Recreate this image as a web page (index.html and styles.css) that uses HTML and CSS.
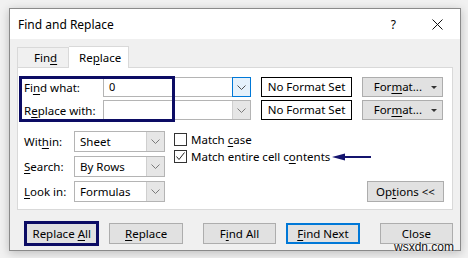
FILE: index.html
```html
<!DOCTYPE html>
<html lang="en">
<head>
    <meta charset="UTF-8">
    <title>Find and Replace</title>
    <link rel="stylesheet" href="styles.css">
</head>
<body>

    <div class="dialog">
        <div class="titlebar">
            <span class="title">Find and Replace</span>
            <span class="help">?</span>
            <svg class="close-icon" width="11" height="11" viewBox="0 0 11 11">
                <path d="M0.5 0.5 L10.5 10.5 M10.5 0.5 L0.5 10.5" stroke="#111" stroke-width="1" fill="none"/>
            </svg>
        </div>

        <div class="content">
            <div class="tabs">
                <div class="tab">Fin<u>d</u></div>
                <div class="tab active">Re<u>p</u>lace</div>
            </div>

            <div class="panel">
                <div class="field-row">
                    <span class="label">Fi<u>n</u>d what:</span>
                    <div class="combo">
                        <span class="combo-text">0</span>
                        <span class="combo-btn focused">
                            <svg width="9" height="5" viewBox="0 0 9 5"><path d="M0.5 0.5 L4.5 4.5 L8.5 0.5" stroke="#505050" fill="none"/></svg>
                        </span>
                    </div>
                    <div class="format-set">No Format Set</div>
                    <div class="btn format-btn"><span>For<u>m</u>at...</span><span class="caret"></span></div>
                </div>
                <div class="field-row">
                    <span class="label">R<u>e</u>place with:</span>
                    <div class="combo">
                        <span class="combo-text"></span>
                        <span class="combo-btn">
                            <svg width="9" height="5" viewBox="0 0 9 5"><path d="M0.5 0.5 L4.5 4.5 L8.5 0.5" stroke="#7a7a7a" fill="none"/></svg>
                        </span>
                    </div>
                    <div class="format-set">No Format Set</div>
                    <div class="btn format-btn"><span>For<u>m</u>at...</span><span class="caret"></span></div>
                </div>

                <div class="lower">
                    <div class="selects">
                        <div class="select-row">
                            <span class="select-label">Wit<u>h</u>in:</span>
                            <div class="select"><span>Sheet</span><span class="select-btn"><svg width="9" height="5" viewBox="0 0 9 5"><path d="M0.5 0.5 L4.5 4.5 L8.5 0.5" stroke="#7a7a7a" fill="none"/></svg></span></div>
                        </div>
                        <div class="select-row">
                            <span class="select-label"><u>S</u>earch:</span>
                            <div class="select"><span>By Rows</span><span class="select-btn"><svg width="9" height="5" viewBox="0 0 9 5"><path d="M0.5 0.5 L4.5 4.5 L8.5 0.5" stroke="#7a7a7a" fill="none"/></svg></span></div>
                        </div>
                        <div class="select-row">
                            <span class="select-label"><u>L</u>ook in:</span>
                            <div class="select"><span>Formulas</span><span class="select-btn"><svg width="9" height="5" viewBox="0 0 9 5"><path d="M0.5 0.5 L4.5 4.5 L8.5 0.5" stroke="#7a7a7a" fill="none"/></svg></span></div>
                        </div>
                    </div>

                    <div class="checks">
                        <label class="check"><span class="box"></span><span>Match <u>c</u>ase</span></label>
                        <label class="check">
                            <span class="box">
                                <svg width="11" height="11" viewBox="0 0 11 11"><path d="M1.5 5.5 L4 8.5 L9.5 1.5" stroke="#222" stroke-width="1" fill="none"/></svg>
                            </span><span>Match entire cell c<u>o</u>ntents</span>
                        </label>
                    </div>

                    <div class="btn options-btn">Op<u>t</u>ions &lt;&lt;</div>
                </div>

                <!-- annotation overlays -->
                <div class="highlight"></div>
                <svg class="pointer" width="40" height="8" viewBox="0 0 40 8">
                    <path d="M0 4 L13 0.5 L13 7.5 Z" fill="#14146e"/>
                    <rect x="12" y="3" width="27" height="2" fill="#14146e"/>
                </svg>
            </div>

            <div class="actions">
                <div class="btn action marked">Replace <u>A</u>ll</div>
                <div class="btn action gap-s"><u>R</u>eplace</div>
                <div class="btn action gap-l">F<u>i</u>nd All</div>
                <div class="btn action gap-s default"><u>F</u>ind Next</div>
                <div class="btn action gap-l">Close</div>
            </div>
        </div>
    </div>

    <div class="watermark">wsxdn.com</div>

</body>
</html>
```

FILE: styles.css
```css
/* Page */
body {
    margin: 0;
    padding: 8px 0 0 9px;
    background-color: #f1f1f1;
    font-family: "Noto Sans", "Open Sans", sans-serif;
    font-size: 11px;
    color: #000;
    height: 258px;
    box-sizing: border-box;
    overflow: hidden;
}

u {
    text-underline-offset: 2px;
}

/* Dialog window */
.dialog {
    width: 452px;
    height: 243px;
    box-sizing: border-box;
    border: 1px solid #8a8a8a;
    background-color: #f0f0f0;
    box-shadow: 0 2px 9px rgba(0, 0, 0, 0.22);
}

.titlebar {
    height: 30px;
    background-color: #fff;
    display: flex;
    align-items: center;
    padding-left: 8px;
}

.title {
    font-size: 12px;
    flex: 1;
    margin-top: 1px;
}

.help {
    font-size: 12px;
    margin-right: 36px;
    margin-top: 1px;
}

.close-icon {
    margin-right: 17px;
    margin-top: 1px;
}

.content {
    padding: 7px 7px 0 7px;
}

/* Tabs */
.tabs {
    display: flex;
    align-items: flex-end;
    height: 21px;
}

.tab {
    height: 20px;
    box-sizing: border-box;
    border: 1px solid #d9d9d9;
    border-bottom: none;
    background-color: #f0f0f0;
    padding: 0 14px 0 16px;
    width: 52px;
    line-height: 19px;
    font-size: 11.5px;
}

.tab.active {
    height: 22px;
    width: 60px;
    background-color: #fff;
    border-left: none;
    padding: 0 10px 0 10px;
    line-height: 21px;
    position: relative;
    z-index: 1;
    margin-bottom: -1px;
}

/* Main panel */
.panel {
    position: relative;
    height: 143px;
    box-sizing: border-box;
    border: 1px solid #d9d9d9;
    background-color: #fff;
    padding: 9px 0 0 6px;
}

.field-row {
    display: flex;
    align-items: center;
    height: 20px;
    margin-bottom: 3px;
}

.label {
    width: 79px;
    font-size: 11.5px;
}

.combo {
    width: 148px;
    height: 20px;
    box-sizing: border-box;
    border: 1px solid #b4b4b4;
    display: flex;
}

.combo-text {
    flex: 1;
    padding-left: 5px;
    line-height: 18px;
}

.combo-btn {
    width: 17px;
    background-color: #e6e6e6;
    border-left: 1px solid #cfcfcf;
    display: flex;
    align-items: center;
    justify-content: center;
}

.combo-btn.focused {
    background-color: #e5f1fb;
    border: 1px solid #0078d7;
    margin: -1px -1px -1px 0;
}

.format-set {
    width: 91px;
    height: 20px;
    box-sizing: border-box;
    border: 1px solid #000;
    margin-left: 10px;
    text-align: center;
    line-height: 18px;
    font-size: 11.5px;
}

.btn {
    background-color: #e1e1e1;
    border: 1px solid #adadad;
    box-sizing: border-box;
    text-align: center;
    font-size: 11.5px;
}

.format-btn {
    width: 81px;
    height: 20px;
    margin-left: 10px;
    line-height: 18px;
    display: flex;
    align-items: center;
    justify-content: flex-end;
    padding-right: 5px;
}

.caret {
    margin-left: 9px;
    border-left: 3px solid transparent;
    border-right: 3px solid transparent;
    border-top: 3px solid #333;
}

/* Lower part */
.lower {
    display: flex;
    margin-top: 11px;
}

.select-row {
    display: flex;
    align-items: center;
    height: 21px;
    margin-bottom: 4px;
}

.select-label {
    width: 50px;
    font-size: 11.5px;
}

.select {
    width: 91px;
    height: 21px;
    box-sizing: border-box;
    border: 1px solid #b4b4b4;
    display: flex;
    align-items: center;
    font-size: 11.5px;
}

.select span:first-child {
    flex: 1;
    padding-left: 5px;
}

.select-btn {
    width: 17px;
    height: 19px;
    background-color: #e6e6e6;
    border-left: 1px solid #cfcfcf;
    display: flex;
    align-items: center;
    justify-content: center;
}

.checks {
    margin-left: 9px;
    padding-top: 2px;
}

.check {
    display: flex;
    align-items: center;
    height: 13px;
    margin-bottom: 4px;
    font-size: 11.5px;
    white-space: nowrap;
}

.box {
    width: 13px;
    height: 13px;
    box-sizing: border-box;
    border: 1px solid #333;
    margin-right: 4px;
    display: flex;
    align-items: center;
    justify-content: center;
}

.options-btn {
    width: 77px;
    height: 21px;
    line-height: 19px;
    margin-left: auto;
    margin-right: 8px;
    align-self: flex-end;
    margin-bottom: 4px;
}

/* Annotations */
.highlight {
    position: absolute;
    left: 1px;
    top: 8px;
    width: 156px;
    height: 46px;
    box-sizing: border-box;
    border: 3px solid #0c0c64;
}

.pointer {
    position: absolute;
    left: 314px;
    top: 85px;
}

/* Bottom buttons */
.actions {
    display: flex;
    align-items: center;
    margin-top: 11px;
    padding-left: 7px;
}

.action {
    width: 74px;
    height: 21px;
    line-height: 19px;
}

.action.marked {
    width: 76px;
    height: 25px;
    border: 3px solid #0c0c64;
    line-height: 19px;
}

.gap-s {
    margin-left: 10px;
}

.gap-l {
    margin-left: 20px;
}

.action.default {
    border: 2px solid #0078d7;
    line-height: 17px;
}

.watermark {
    position: absolute;
    left: 394px;
    top: 240px;
    font-family: "Liberation Sans", sans-serif;
    font-size: 12px;
    color: #111;
    text-shadow: 0 0 2px #fff, 0 0 2px #fff;
}
```
